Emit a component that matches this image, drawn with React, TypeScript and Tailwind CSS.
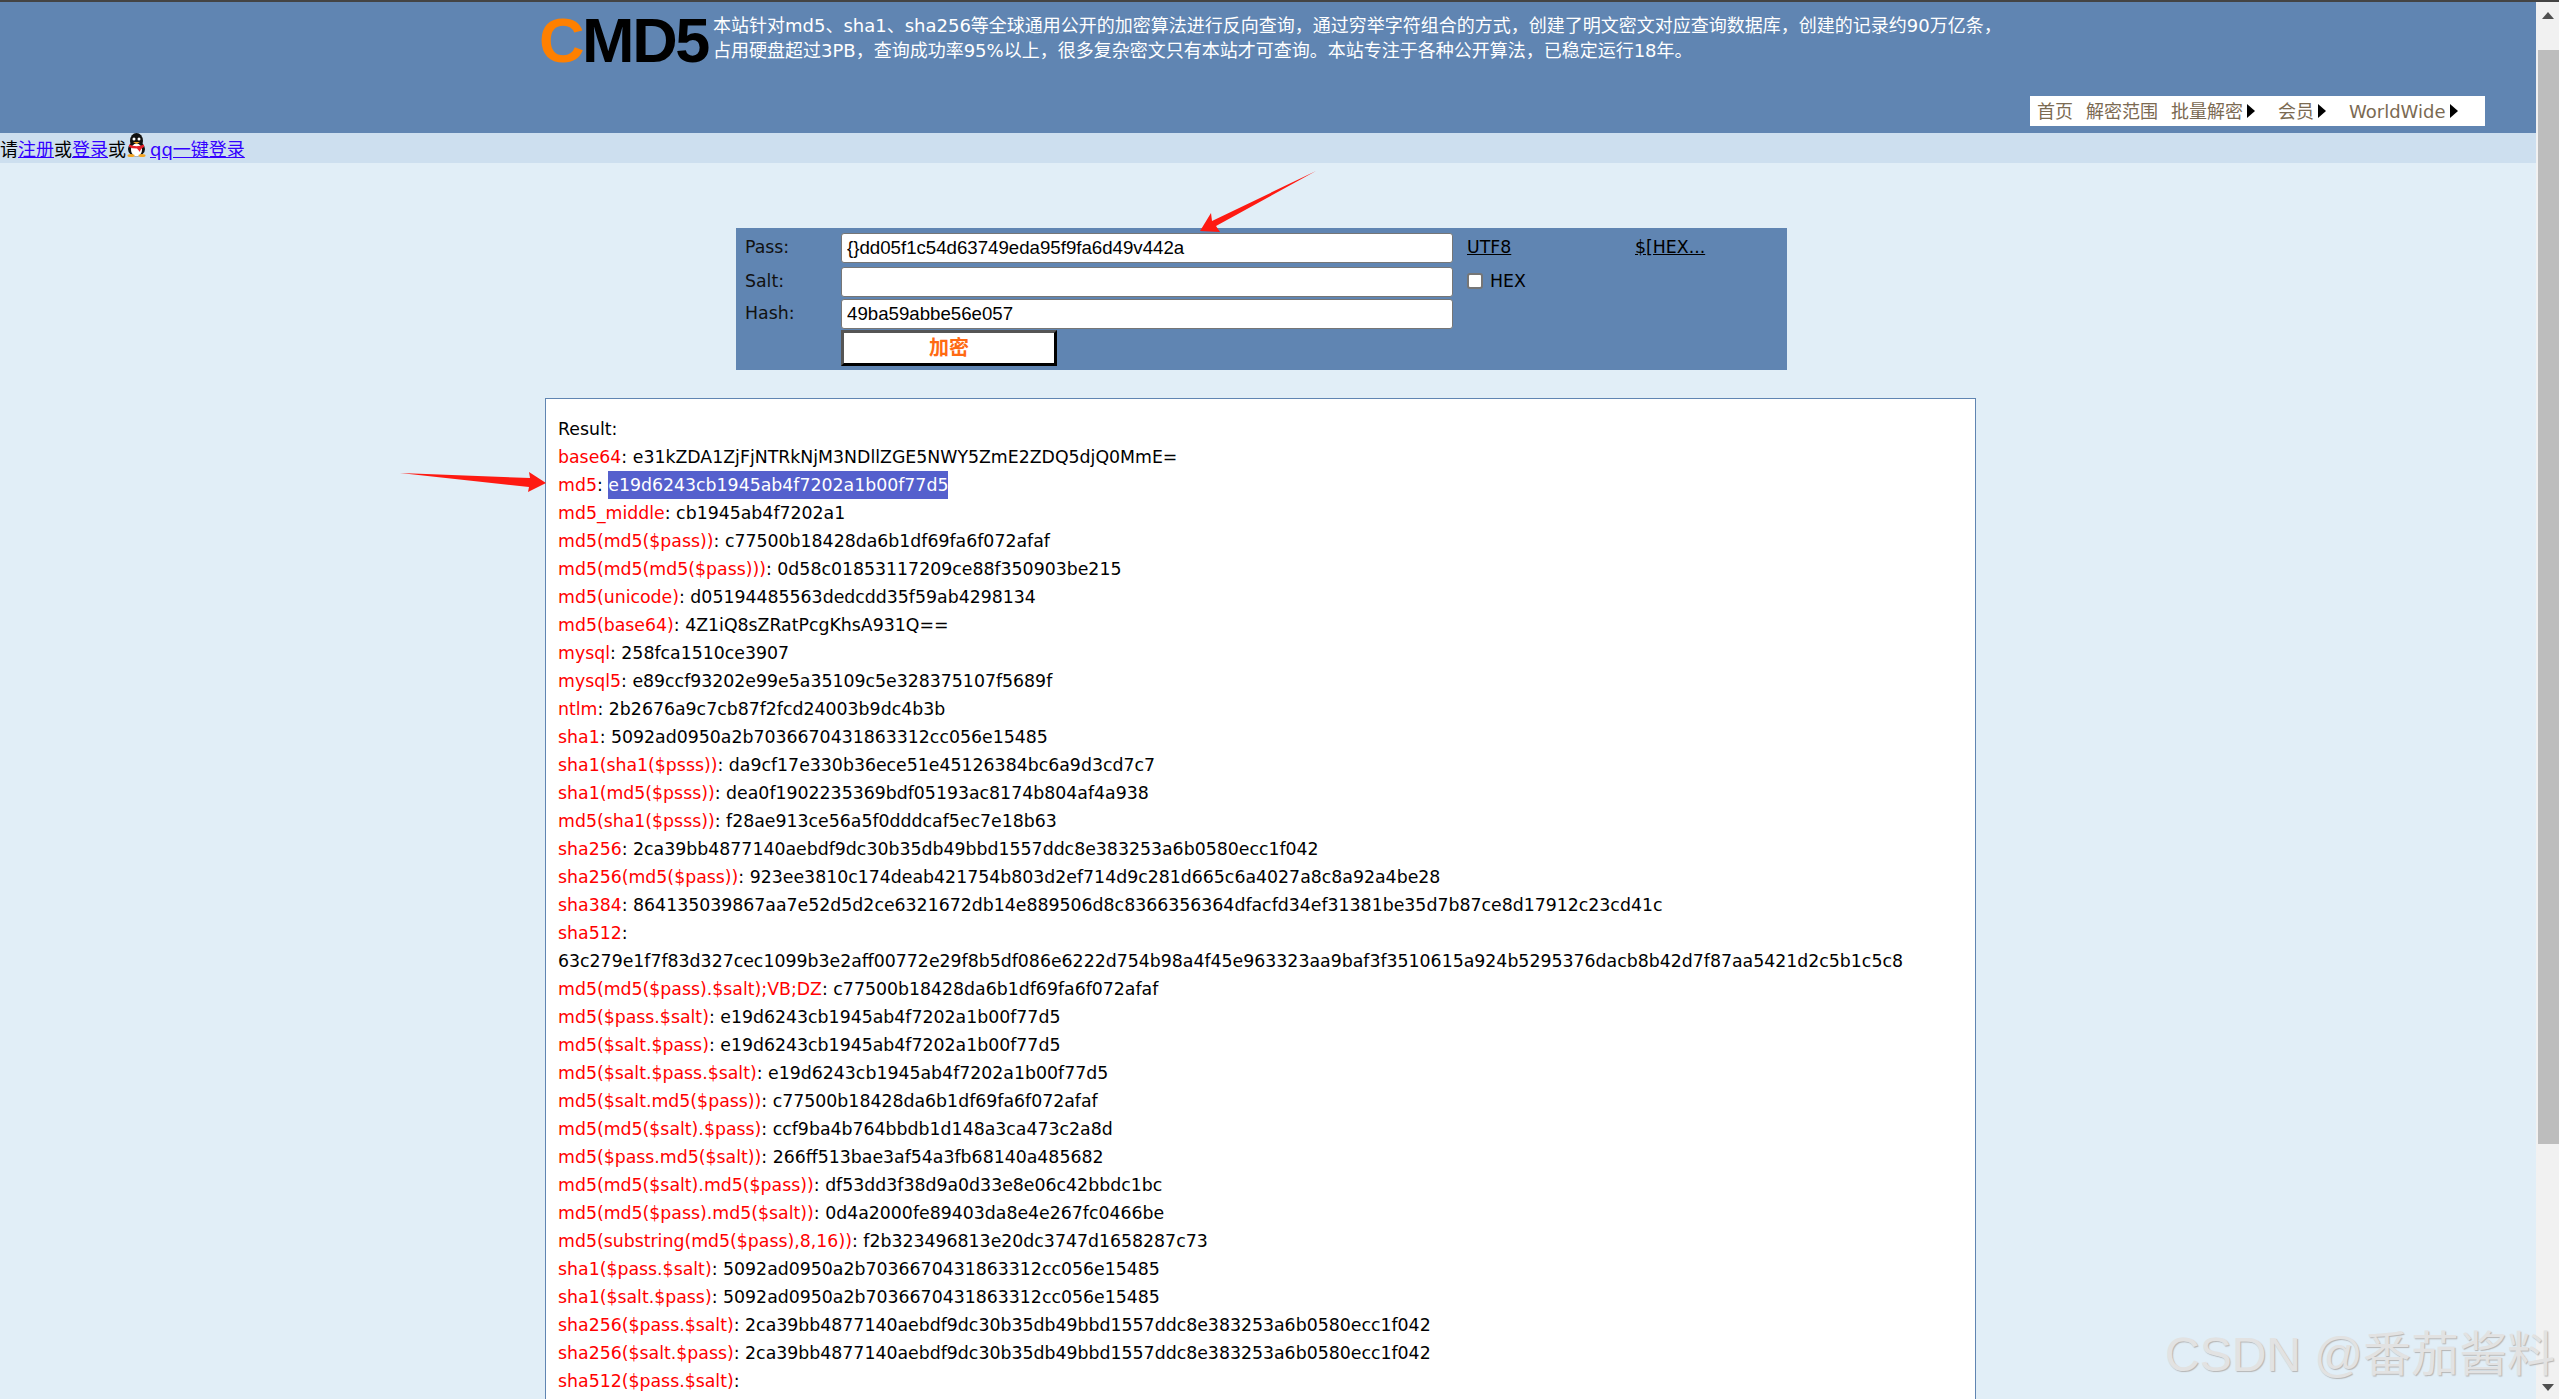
const verdana = 'font-["DejaVu_Sans","Noto_Sans_CJK_SC",sans-serif]'

// label + value rows of the result box, top to bottom
const rows: [string, string][] = [
  ['base64', 'e31kZDA1ZjFjNTRkNjM3NDllZGE5NWY5ZmE2ZDQ5djQ0MmE='],
  ['md5', 'e19d6243cb1945ab4f7202a1b00f77d5'],
  ['md5_middle', 'cb1945ab4f7202a1'],
  ['md5(md5($pass))', 'c77500b18428da6b1df69fa6f072afaf'],
  ['md5(md5(md5($pass)))', '0d58c01853117209ce88f350903be215'],
  ['md5(unicode)', 'd05194485563dedcdd35f59ab4298134'],
  ['md5(base64)', '4Z1iQ8sZRatPcgKhsA931Q=='],
  ['mysql', '258fca1510ce3907'],
  ['mysql5', 'e89ccf93202e99e5a35109c5e328375107f5689f'],
  ['ntlm', '2b2676a9c7cb87f2fcd24003b9dc4b3b'],
  ['sha1', '5092ad0950a2b7036670431863312cc056e15485'],
  ['sha1(sha1($psss))', 'da9cf17e330b36ece51e45126384bc6a9d3cd7c7'],
  ['sha1(md5($psss))', 'dea0f1902235369bdf05193ac8174b804af4a938'],
  ['md5(sha1($psss))', 'f28ae913ce56a5f0dddcaf5ec7e18b63'],
  ['sha256', '2ca39bb4877140aebdf9dc30b35db49bbd1557ddc8e383253a6b0580ecc1f042'],
  ['sha256(md5($pass))', '923ee3810c174deab421754b803d2ef714d9c281d665c6a4027a8c8a92a4be28'],
  ['sha384', '864135039867aa7e52d5d2ce6321672db14e889506d8c8366356364dfacfd34ef31381be35d7b87ce8d17912c23cd41c'],
  ['sha512', ''],
  ['', '63c279e1f7f83d327cec1099b3e2aff00772e29f8b5df086e6222d754b98a4f45e963323aa9baf3f3510615a924b5295376dacb8b42d7f87aa5421d2c5b1c5c8'],
  ['md5(md5($pass).$salt);VB;DZ', 'c77500b18428da6b1df69fa6f072afaf'],
  ['md5($pass.$salt)', 'e19d6243cb1945ab4f7202a1b00f77d5'],
  ['md5($salt.$pass)', 'e19d6243cb1945ab4f7202a1b00f77d5'],
  ['md5($salt.$pass.$salt)', 'e19d6243cb1945ab4f7202a1b00f77d5'],
  ['md5($salt.md5($pass))', 'c77500b18428da6b1df69fa6f072afaf'],
  ['md5(md5($salt).$pass)', 'ccf9ba4b764bbdb1d148a3ca473c2a8d'],
  ['md5($pass.md5($salt))', '266ff513bae3af54a3fb68140a485682'],
  ['md5(md5($salt).md5($pass))', 'df53dd3f38d9a0d33e8e06c42bbdc1bc'],
  ['md5(md5($pass).md5($salt))', '0d4a2000fe89403da8e4e267fc0466be'],
  ['md5(substring(md5($pass),8,16))', 'f2b323496813e20dc3747d1658287c73'],
  ['sha1($pass.$salt)', '5092ad0950a2b7036670431863312cc056e15485'],
  ['sha1($salt.$pass)', '5092ad0950a2b7036670431863312cc056e15485'],
  ['sha256($pass.$salt)', '2ca39bb4877140aebdf9dc30b35db49bbd1557ddc8e383253a6b0580ecc1f042'],
  ['sha256($salt.$pass)', '2ca39bb4877140aebdf9dc30b35db49bbd1557ddc8e383253a6b0580ecc1f042'],
  ['sha512($pass.$salt)', ''],
]

function Caret() {
  return <span className="ml-[4px] h-0 w-0 border-y-[7px] border-l-[8px] border-y-transparent border-l-black" />
}

function Penguin() {
  return (
    <svg viewBox="0 0 21 24" className="h-[24px] w-[21px] shrink-0">
      <ellipse cx="10.5" cy="8" rx="6.5" ry="8" fill="#111" />
      <ellipse cx="10.5" cy="16" rx="8.5" ry="7.5" fill="#111" />
      <ellipse cx="10.5" cy="17" rx="5.5" ry="6.5" fill="#fff" />
      <circle cx="8" cy="6" r="1.5" fill="#fff" />
      <circle cx="13" cy="6" r="1.5" fill="#fff" />
      <path d="M7 9 L14 9 L10.5 11 Z" fill="#f5a623" />
      <path d="M3 11.5 Q10.5 15 18 11.5 L18 14 Q14 16 14 19 L11 15.5 Q6 15.5 3 14 Z" fill="#e3202a" />
      <ellipse cx="5" cy="22.5" rx="3.5" ry="1.5" fill="#f5a623" />
      <ellipse cx="16" cy="22.5" rx="3.5" ry="1.5" fill="#f5a623" />
    </svg>
  )
}

function FormRow({ label, value, children, className }: { label: string; value: string; children?: React.ReactNode; className?: string }) {
  return (
    <div className={`flex h-[30px] items-center ${className ?? ''}`}>
      <span className="w-[96px] shrink-0 text-[#111]">{label}</span>
      <input
        readOnly
        value={value}
        className='h-[30px] w-[612px] shrink-0 rounded-[3px] border border-[#767676] bg-white px-[5px] font-["Liberation_Sans",sans-serif] text-[18.67px] text-black outline-none'
      />
      {children}
    </div>
  )
}

export default function App() {
  return (
    <div className={`relative flex h-screen flex-col overflow-hidden bg-[#e1eef7] ${verdana}`}>
      <div className="h-[2px] shrink-0 bg-[#444444]" />
      <div className="flex min-h-0 flex-1">
        <main className="min-w-0 flex-1 overflow-hidden">
          <header className="flex h-[131px] flex-col bg-[#6085b2]">
            <div className="flex pl-[539px] pt-[9px]">
              <div className='w-[174px] font-["Liberation_Sans",sans-serif] text-[63px] leading-[58px] font-bold tracking-[-2.4px] text-black'>
                <span className="text-[#ff8000]">C</span>MD5
              </div>
              <p className="pt-[2px] text-[18px] leading-[25px] text-white">
                本站针对md5、sha1、sha256等全球通用公开的加密算法进行反向查询，通过穷举字符组合的方式，创建了明文密文对应查询数据库，创建的记录约90万亿条，
                <br />
                占用硬盘超过3PB，查询成功率95%以上，很多复杂密文只有本站才可查询。本站专注于各种公开算法，已稳定运行18年。
              </p>
            </div>
            <nav className="mt-auto mb-[7px] mr-[51px] flex h-[30px] w-[455px] items-center self-end bg-white pl-[7px] text-[18px] text-[#7b6a52]">
              <span>首页</span>
              <span className="ml-[13px]">解密范围</span>
              <span className="ml-[13px]">批量解密</span>
              <Caret />
              <span className="ml-[23px]">会员</span>
              <Caret />
              <span className="ml-[23px]">WorldWide</span>
              <Caret />
            </nav>
          </header>

          <div className="flex h-[30px] items-end bg-[#cddfef] text-[18px] leading-[26px] text-black">
            <span>请</span>
            <a className="text-[#3300ff] underline">注册</a>
            <span>或</span>
            <a className="text-[#3300ff] underline">登录</a>
            <span>或</span>
            <span className="mb-[6px]">
              <Penguin />
            </span>
            <a className="ml-[3px] text-[#3300ff] underline">qq一键登录</a>
          </div>

          <form className="ml-[736px] mt-[65px] h-[142px] w-[1051px] bg-[#6085b2] pl-[9px] pt-[5px] text-[17.33px]">
            <FormRow label="Pass:" value="{}dd05f1c54d63749eda95f9fa6d49v442a">
              <a className="ml-[14px] w-[168px] text-black underline">UTF8</a>
              <a className="text-black underline">$[HEX...</a>
            </FormRow>
            <FormRow label="Salt:" value="" className="mt-[4px]">
              <input type="checkbox" readOnly className="ml-[14px] mb-[3px] h-[16px] w-[16px] appearance-none rounded-[3px] border-2 border-[#767676] bg-white" />
              <span className="ml-[7px] text-black">HEX</span>
            </FormRow>
            <FormRow label="Hash:" value="49ba59abbe56e057" className="mt-[2px]" />
            <button
              type="button"
              className="ml-[96px] mt-[1px] block h-[36px] w-[216px] border-[3px] border-t-[#555555] border-l-[#555555] border-r-black border-b-black bg-white text-[20px] font-bold text-[#ff6a13]"
            >
              加密
            </button>
          </form>

          <section className="ml-[545px] mt-[28px] w-[1431px] border border-[#6085b2] bg-white px-[12px] pt-[16px] pb-[40px] text-[17.33px] leading-[28px] text-black">
            <div>Result:</div>
            {rows.map(([label, value], i) => (
              <div key={i} className="whitespace-nowrap">
                {label && <span className="text-[#ff0000]">{label}</span>}
                {label && ': '}
                {label === 'md5' ? <span className="inline-block bg-[#5560cd] text-white">{value}</span> : value}
              </div>
            ))}
          </section>
        </main>

        <aside className="relative flex w-[23px] shrink-0 flex-col items-end bg-[#f1f1f1]">
          <div className="flex h-[48px] w-full justify-center pt-[10px]">
            <span className="h-0 w-0 border-x-[6px] border-b-[7px] border-x-transparent border-b-[#505050]" />
          </div>
          <div className="h-[1094px] w-[21px] bg-[#bdbdbd]" />
          <div className="mt-auto mb-[8px] flex w-full justify-center">
            <span className="h-0 w-0 border-x-[6px] border-t-[7px] border-x-transparent border-t-[#505050]" />
          </div>
        </aside>
      </div>

      {/* red annotation arrows drawn over the screenshot */}
      <svg viewBox="0 0 2559 1399" className="pointer-events-none absolute inset-0 h-[1399px] w-[2559px]">
        <polygon points="1316,171 1212,221 1211,213 1200,231 1220,232 1216,226" fill="#fe1a12" />
        <polygon points="400,473 530,478 529,472 546,483 528,492 529,487" fill="#fe1a12" />
      </svg>

      <div className='pointer-events-none absolute top-[1325px] left-[2165px] whitespace-nowrap font-["Liberation_Sans","Noto_Sans_CJK_SC",sans-serif] text-[48px] leading-[60px] text-[#e2e2e2] [text-shadow:1px_1px_1px_#b5b5b5]'>
        CSDN @番茄酱料
      </div>
    </div>
  )
}
